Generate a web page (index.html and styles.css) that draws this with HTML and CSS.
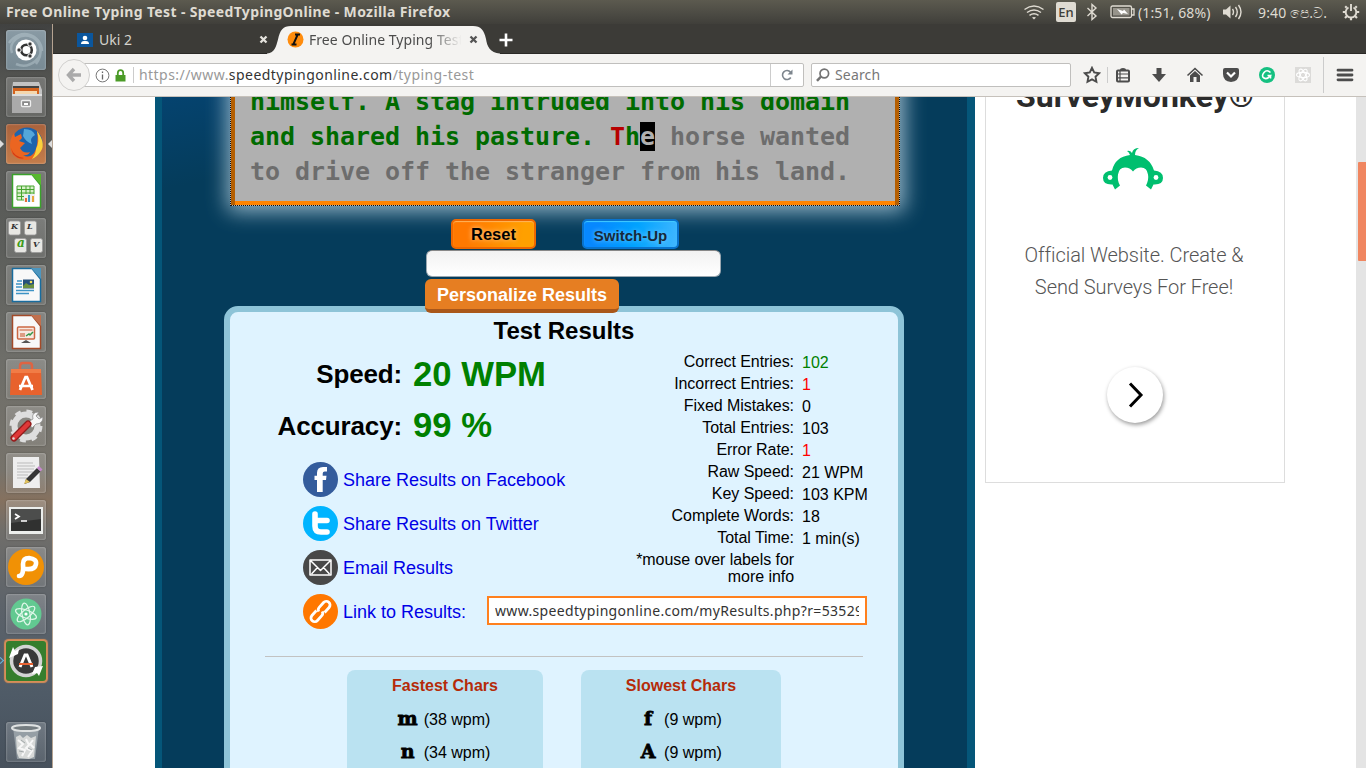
FILE: index.html
```html
<!DOCTYPE html>
<html lang="en">
<head>
<meta charset="utf-8">
<title>Free Online Typing Test - SpeedTypingOnline</title>
<link rel="stylesheet" href="styles.css">
</head>
<body>
<header class="panel">
  <div class="panel-title">Free Online Typing Test - SpeedTypingOnline - Mozilla Firefox</div>
  <div class="tray">
    <svg class="wifi" width="22" height="18" viewBox="0 0 22 18" fill="none" stroke="#dfdbd2" stroke-width="1.5"><path d="M1.5 6.5q9.5-7 19 0M4 9.5q7-5 14 0M6.500 12.300q4.500-3.300 9 0"/><path d="M9 14.500q2-1.200 4 0l-2 2z" fill="#dfdbd2" stroke="none"/></svg>
    <span class="lang">En</span>
    <svg class="bt" width="12" height="18" viewBox="0 0 12 18" fill="none" stroke="#dfdbd2" stroke-width="1.400"><path d="M1.500 5l8.500 8-4 3.500V1.500L10 5l-8.500 8"/></svg>
    <svg class="batt" width="26" height="14" viewBox="0 0 26 14"><rect x="1" y="1" width="20.500" height="11.500" rx="1.500" fill="none" stroke="#dfdbd2" stroke-width="1.300"/><path d="M22 4h2v6h-2" fill="none" stroke="#dfdbd2" stroke-width="1.300"/><rect x="3" y="3" width="16.500" height="7.500" fill="#97948b"/><path d="M7 4l6 2 1-1.500L18 9l-5-1-1.500 1.500z" fill="#fff"/></svg>
    <span class="battery-text">(1:51, 68%)</span>
    <svg class="vol" width="22" height="18" viewBox="0 0 22 18" fill="none" stroke="#dfdbd2" stroke-width="1.400"><path d="M1 6.500h3l4.500-4v13l-4.500-4H1z" fill="#dfdbd2" stroke="none"/><path d="M10.500 6q2 3 0 6M13.500 4q3.500 5 0 10M16.500 2q5 7 0 14"/></svg>
    <span class="clock">9:40 <span class="si">පෙ.ව.</span></span>
    <svg class="gear" width="18" height="18" viewBox="-9 -9 18 18" fill="none" stroke="#dfdbd2"><path d="M-2.500-4.500A5.300 5.300 0 1 0 2.500-4.500" stroke-width="1.900"/><path d="M0-8v7" stroke-width="1.900"/><path d="M5.500 0h2.700M-5.500 0h-2.700M0 5.500v2.700M4 4l2 2M-4 4l-2 2M4.300-4.300l1.500-1.500M-4.300-4.300l-1.500-1.500" stroke-width="2.200"/></svg>
  </div>
</header>

<div class="desktop">
  <nav class="launcher">
    <div class="tile dash"><svg viewBox="0 0 40 40"><path d="M6 23C2 12 14 2 26 7c10 5 11 18 4 27M10 34C24 40 39 27 34 15M3 13C14-3 35 4 36 21" fill="none" stroke="#bccbd2" stroke-width="2.500" opacity=".45"/><circle cx="20" cy="20" r="10.500" fill="#fff"/><circle cx="20.500" cy="20" r="5.300" fill="none" stroke="#333" stroke-width="2.600"/><g fill="#333" stroke="#fff"><circle cx="13" cy="20" r="2.200"/><circle cx="24" cy="14" r="2.200"/><circle cx="24" cy="26" r="2.200"/></g></svg></div>
    <div class="tile"><svg viewBox="0 0 40 40"><path d="M7 5h26l3 8v23H6V13z" fill="#c3c3c3"/><path d="M7 9h26v8H7z" fill="#444"/><path d="M7 11h26v6H7z" fill="#d4631d"/><path d="M9 14h22v3H9z" fill="#f4d7ae"/><path d="M6 17h30v19H6z" fill="#aaa"/><path d="M6 17h30v2H6z" fill="#ddd"/><rect x="15.500" y="23.500" width="9" height="6" rx="1" fill="#888" stroke="#eee" stroke-width="1.300"/><path d="M18 26h4v2h-4z" fill="#fff"/></svg></div>
    <div class="tile fox"><i class="arrow-l"></i><i class="arrow-r"></i><svg viewBox="0 0 40 40"><circle cx="21" cy="19" r="15.500" fill="#1c64ad"/><path d="M18 5q9 0 11 6-6 3-3 9-6-2-9-8z" fill="#53a7da"/><path d="M31 7q8 12 4 20-5 9-16 9Q5 35 4 22q0-8 4-13l1 4 6-3 1 4-3 3 6 2-5 5q3 6 10 4-2 4-7 3 6 4 11-2 5-8 3-22z" fill="#eb6521"/><path d="M31 7q9 12 4 20-4 6-9 8 4-6 4-10 4-8 1-18z" fill="#fbd23c"/><path d="M5 24q3 9 13 10-5 2-11-4z" fill="#d23b16"/></svg></div>
    <div class="tile"><svg viewBox="0 0 40 40"><path d="M6.500 3.500H26L34.500 14v22.500h-28z" fill="#fff" stroke="#3aa22b" stroke-width="1.500"/><path d="M25 3h10v11z" fill="#58b82f"/><path d="M11 15h17v14H11z" fill="#d9f1cb" stroke="#46a52f"/><path d="M11 18.500h17M11 22h17M11 25.500h17M15.500 15v14M20 15v14M24 15v14" stroke="#46a52f"/><path d="M18 23h11v8H18z" fill="#eee"/><path d="M19 27h2v4h-2z" fill="#e56937"/><path d="M22 24h2v7h-2z" fill="#3b9ccc"/><path d="M26 25h2v6h-2z" fill="#e6a63c"/></svg></div>
    <div class="tile"><svg viewBox="0 0 40 40"><g fill="#e7e7e3" stroke="#999" stroke-width=".8"><rect x="2.500" y="3" width="12" height="14" rx="2"/><rect x="18.500" y="3" width="12" height="14" rx="2"/><rect x="8.500" y="20.500" width="12" height="14" rx="2"/><rect x="24.500" y="20.500" width="12" height="14" rx="2"/></g><g class="keys"><text x="5" y="11">K</text><text x="21" y="11">L</text><text class="key-a" x="11" y="29">a</text><text x="27" y="29">V</text></g></svg></div>
    <div class="tile"><svg viewBox="0 0 40 40"><path d="M6.500 3.500H26L34.500 14v22.500h-28z" fill="#f8f8f8" stroke="#186c9e" stroke-width="1.500"/><path d="M25 3h10v11z" fill="#4d96bf"/><path d="M10 19h6M10 22h6M10 25.500h18M10 28.500h13M11 16h5" stroke="#3d93c5" stroke-width="1.700"/><path d="M17 14.500h11v9H17z" fill="#254f7b"/><path d="M17 21l3-3 3 2 5-1v4H17z" fill="#6a9040"/><circle cx="25" cy="17" r="1.300" fill="#f7df58"/></svg></div>
    <div class="tile"><svg viewBox="0 0 40 40"><path d="M6.500 3.500H26L34.500 14v22.500h-28z" fill="#f8f8f8" stroke="#a34a28" stroke-width="1.500"/><path d="M25 3h10v11z" fill="#c1704e"/><rect x="11.500" y="15" width="17" height="12" rx="1" fill="#f8e9e1" stroke="#cc6843" stroke-width="1.500"/><path d="M13.500 18h13" stroke="#d98a6d" stroke-width="1.500"/><path d="M14 21h5v4h-5z" fill="#de9c83"/><path d="M20 24l3-2 1 1 3-3" fill="none" stroke="#35974a" stroke-width="1.500"/><path d="M15 31l5-3 5 3z" fill="#555"/></svg></div>
    <div class="tile"><svg viewBox="0 0 40 40"><path d="M14 13V7q0-3 3-3h6q3 0 3 3v6" fill="none" stroke="#de6442" stroke-width="2.500"/><path d="M5 10h30l1 26H4z" fill="#e8622d"/><path d="M5 10h30v4H5z" fill="#f17c46"/><path d="M14 31l5.500-13h1.500l5.500 13M13 27h14" fill="none" stroke="#fff" stroke-width="2.700"/></svg></div>
    <div class="tile"><svg viewBox="0 0 40 40"><circle cx="20" cy="20" r="11.500" fill="none" stroke="#dedede" stroke-width="6"/><circle cx="20" cy="20" r="14.500" fill="none" stroke="#dedede" stroke-width="4" stroke-dasharray="5.700 5.690"/><path d="M22 16l5-3q-2-7 6-7l-3 4 3 3 4-2q0 7-7 7l-4 4z" fill="#f7f7f7" stroke="#888" stroke-width=".7"/><path d="M8 32L22 18" stroke="#911b1b" stroke-width="7" stroke-linecap="round"/><path d="M8 32L22 18" stroke="#df3838" stroke-width="4.500" stroke-linecap="round"/><circle cx="7.500" cy="32.500" r="1.200" fill="#ddd"/></svg></div>
    <div class="tile"><svg viewBox="0 0 40 40"><path d="M7 4h26l1 31H7z" fill="#eee"/><path d="M11 10h16M11 13h18M11 16h17M11 19h16M11 22h11M11 25h10" stroke="#bbb" stroke-width="1"/><path d="M20 26L31 15l3.500 3.500L24 29l-5.500 2z" fill="#353535"/><path d="M20 26l4 3-6 2z" fill="#e1c25d"/><path d="M31 15l2-2 3.500 3.500-2 2z" fill="#c888cf"/></svg></div>
    <div class="tile"><svg viewBox="0 0 40 40"><path d="M3 7h34v27H3z" fill="#eceeec"/><path d="M5 9h30v22H5z" fill="#303130"/><path d="M5 9h30v10L5 23z" fill="#4c4d4c"/><path d="M9 14l4 2.500L9 19M15 21h6" fill="none" stroke="#fff" stroke-width="1.700"/></svg></div>
    <div class="tile"><svg viewBox="0 0 40 40"><circle cx="20" cy="20" r="18" fill="#f19105"/><path d="M13 29q5 0 4-12 0-6 6-6 8 1 7 6-1 6-10 5" fill="none" stroke="#fff" stroke-width="4.600" stroke-linecap="round" stroke-linejoin="round"/></svg></div>
    <div class="tile"><svg viewBox="0 0 40 40"><circle cx="20" cy="20" r="15.500" fill="#62c991"/><g fill="none" stroke="#dff7e9" stroke-width="1.200"><ellipse cx="20" cy="20" rx="11" ry="4" transform="rotate(20 20 20)"/><ellipse cx="20" cy="20" rx="11" ry="4" transform="rotate(80 20 20)"/><ellipse cx="20" cy="20" rx="11" ry="4" transform="rotate(140 20 20)"/></g><circle cx="20" cy="20" r="1.600" fill="#fff"/></svg></div>
    <div class="tile updater"><i class="chev"></i><svg viewBox="0 0 40 40"><circle cx="20" cy="20" r="14.500" fill="#393939" stroke="#d4d4d4" stroke-width="3.500"/><path d="M3 17l4-11 2 4 4-2-1 5zM37 25l-4 10-2-3-5 1 3-7z" fill="#fff"/><path d="M14 26l5-12h2l5 12" fill="none" stroke="#fff" stroke-width="3"/><path d="M13 23h14" stroke="#e86333" stroke-width="2"/></svg></div>
    <div class="tile trash"><svg viewBox="0 0 40 40"><path d="M7 5h26l-4 32H11z" fill="#aeb7bc" opacity=".65"/><ellipse cx="20" cy="6" rx="14" ry="3" fill="#747c80" stroke="#dfe2e2" stroke-width="2"/><path d="M10 15l4-2 3 3 4-3 4 3 5-2-2 21-5 2-10-1-2-5z" fill="#d7d9d8"/><path d="M12 18l5 4-4 4 6 2-3 6M20 17l3 6-3 3 6 3-4 6M27 18l-3 4 4 4" fill="none" stroke="#f7f7f7" stroke-width="2"/><path d="M15 18l4 3M22 26l4 2M13 29l5 1" stroke="#a3a9aa"/></svg></div>
  </nav>

  <main class="browser">
    <div class="tabs">
      <div class="tab">
        <svg width="16" height="14" viewBox="0 0 16 14"><path d="M0 0h16v14H0z" fill="#0b569d"/><circle cx="8" cy="5" r="2.300" fill="#fff"/><path d="M4 11q0-3 3-3h2q3 0 3 3z" fill="#fff"/></svg>
        <span class="tab-name">Uki 2</span><svg class="close" width="9" height="9" viewBox="0 0 9 9"><path d="M1.500 1.500l6 6m0-6l-6 6" stroke="#e5e3dd" stroke-width="2.300"/></svg>
      </div>
      <div class="tab active">
        <svg class="tab-shape" width="236" height="29" viewBox="0 0 236 29"><path d="M0 28.500c8-1 9-7 11-14C13 5 16 1 24 1h182c8 0 11 4 13 13 1 7 4 14 14 14.500v.5H0z" fill="#f4f3f1"/></svg>
        <svg class="fav" width="17" height="17" viewBox="0 0 17 17"><circle cx="8.500" cy="8.500" r="8" fill="#ff8c0d"/><path d="M8 3.500h5M4.500 13.500h5M10.500 4l-4 9" stroke="#111" stroke-width="1.900"/></svg>
        <span class="tab-name">Free Online Typing Test</span><svg class="close" width="9" height="9" viewBox="0 0 9 9"><path d="M1.500 1.500l6 6m0-6l-6 6" stroke="#555" stroke-width="2.300"/></svg>
      </div>
      <svg class="plus" width="14" height="14" viewBox="0 0 14 14"><path d="M7 .500v13M.500 7h13" stroke="#fff" stroke-width="2.600"/></svg>
    </div>

    <div class="toolbar">
      <div class="back"><svg width="16" height="16" viewBox="0 0 16 16"><path d="M8 2L2.500 8 8 14M3 8h12" fill="none" stroke="#aaa" stroke-width="3.400"/></svg></div>
      <div class="url">
        <svg class="info" width="15" height="15" viewBox="0 0 15 15"><circle cx="7.500" cy="7.500" r="6.400" fill="none" stroke="#777"/><path d="M7.500 6.500v5M7.500 3.500v1.500" stroke="#666" stroke-width="1.300"/></svg>
        <svg class="lock" width="11" height="13" viewBox="0 0 11 13"><path d="M.5 6h10v6.500H.5z" fill="#4b9b27"/><path d="M2.800 7V4q0-2.800 2.700-2.800T8.200 4v3" fill="none" stroke="#4b9b27" stroke-width="1.800"/></svg>
        <span class="url-text">https://www.<b>speedtypingonline.com</b>/typing-test</span>
        <span class="reload"><svg width="14" height="14" viewBox="0 0 14 14"><path d="M10.800 9.500A4.500 4.500 0 1 1 10.500 4.200" fill="none" stroke="#7d858d" stroke-width="1.600"/><path d="M12.500 1.500v5h-5z" fill="#7d858d"/></svg></span>
      </div>
      <div class="search"><svg width="14" height="14" viewBox="0 0 14 14" fill="none" stroke="#737373"><circle cx="8.300" cy="5.500" r="4.300" stroke-width="1.700"/><path d="M5 8.500L1 12.800" stroke-width="2.500"/></svg><span>Search</span></div>
      <div class="tools">
        <svg viewBox="0 0 18 18"><path d="M9 1.800l2.200 4.700 5 .7-3.700 3.500.9 5.100L9 13.400l-4.500 2.400.9-5.100L1.800 7.200l5-.7z" fill="none" stroke="#4c4c4c" stroke-width="1.900"/></svg>
        <i class="sep"></i>
        <svg viewBox="0 0 18 18"><rect x="3" y="4.500" width="12" height="11" rx="1" fill="none" stroke="#4c4c4c" stroke-width="2"/><path d="M6 4q0-2 3-2t3 2" fill="#4c4c4c"/><path d="M3 8h12M3 11.800h12M6 5v10" stroke="#4c4c4c" stroke-width="1.200"/></svg>
        <svg viewBox="0 0 18 18"><path d="M6.500 2h5v6H16l-7 8-7-8h4.500z" fill="#4c4c4c"/></svg>
        <svg viewBox="0 0 18 18"><path d="M1.500 9.500L9 2.500l7.500 7" fill="none" stroke="#4c4c4c" stroke-width="1.600"/><path d="M4 9.500l5-4.500 5 4.500V16h-3.500v-5h-3v5H4z" fill="#4c4c4c"/></svg>
        <svg viewBox="0 0 18 18"><path d="M1 4q0-2 2-2h12q2 0 2 2v4q0 7-8 8Q1 15 1 8z" fill="#4c4c4c"/><path d="M5 6.500l4 4 4-4" fill="none" stroke="#fff" stroke-width="2.200"/></svg>
        <svg viewBox="0 0 18 18"><circle cx="9" cy="9" r="8" fill="#15c081"/><path d="M12.500 6.500Q9 3 6 6.500t0 5.500 6.500-2.500H9.500M12.500 9.500v3" fill="none" stroke="#fff" stroke-width="1.600"/></svg>
        <svg viewBox="0 0 18 18"><path d="M1 1h16v16H1z" fill="#dcdbd9"/><g fill="none" stroke="#fff" stroke-width="1.100"><ellipse cx="9" cy="9" rx="6.500" ry="2.600"/><ellipse cx="9" cy="9" rx="6.500" ry="2.600" transform="rotate(60 9 9)"/><ellipse cx="9" cy="9" rx="6.500" ry="2.600" transform="rotate(120 9 9)"/></g></svg>
        <i class="sep tall"></i>
        <svg viewBox="0 0 18 18"><path d="M2 4.200h14M2 9h14M2 13.800h14" stroke="#4c4c4c" stroke-width="2.800" stroke-linecap="round"/></svg>
      </div>
    </div>

    <div class="viewport">
      <article class="page">
        <div class="typing">
          <div class="line done">himself. A stag intruded into his domain</div>
          <div class="line"><span class="done">and shared his pasture. </span><span class="wrong">T</span><span class="done">h</span><span class="caret">e</span> horse wanted</div>
          <div class="line">to drive off the stranger from his land.</div>
        </div>
        <div class="buttons"><div class="btn reset">Reset</div><div class="btn switch">Switch-Up</div></div>
        <div class="entry"></div>
        <div class="personalize">Personalize Results</div>
        <section class="results">
          <h2>Test Results</h2>
          <div class="summary">
            <div class="left">
              <div class="score"><span class="k">Speed:</span><span class="v">20 WPM</span></div>
              <div class="score second"><span class="k">Accuracy:</span><span class="v">99 %</span></div>
              <div class="share"><svg viewBox="0 0 35 35"><circle cx="17.500" cy="17.500" r="17.500" fill="#345c9c"/><path d="M14 30V18h-2.500v-4.200H14V11q0-6 6-6h4v4.500h-2.300q-2 0-2 2v2.300h3.800L23 18h-3.300v12z" fill="#fff"/></svg>Share Results on Facebook</div>
              <div class="share"><svg viewBox="0 0 35 35"><circle cx="17.500" cy="17.500" r="17.500" fill="#00b4ff"/><path d="M12 8v12q0 6 6 6h6M12 14.500h12" fill="none" stroke="#fff" stroke-width="5.600" stroke-linecap="round"/></svg>Share Results on Twitter</div>
              <div class="share"><svg viewBox="0 0 35 35"><circle cx="17.500" cy="17.500" r="17.500" fill="#484848"/><path d="M7 10h21v15H7zM8 11l9.500 9.500L27 11M8.500 24l6-6.500M26.500 24l-6-6.500" fill="none" stroke="#fff" stroke-width="1.500" stroke-linejoin="round"/></svg>Email Results</div>
            </div>
            <dl class="stats">
              <dt>Correct Entries:</dt><dd class="good">102</dd>
              <dt>Incorrect Entries:</dt><dd class="bad">1</dd>
              <dt>Fixed Mistakes:</dt><dd>0</dd>
              <dt>Total Entries:</dt><dd>103</dd>
              <dt>Error Rate:</dt><dd class="bad">1</dd>
              <dt>Raw Speed:</dt><dd>21 WPM</dd>
              <dt>Key Speed:</dt><dd>103 KPM</dd>
              <dt>Complete Words:</dt><dd>18</dd>
              <dt>Total Time:</dt><dd>1 min(s)</dd>
              <dt class="note">*mouse over labels for more info</dt>
            </dl>
          </div>
          <div class="share linkrow"><svg viewBox="0 0 35 35"><circle cx="17.500" cy="17.500" r="17.500" fill="#ff7700"/><g transform="rotate(-48 17.500 17.500)" fill="none" stroke="#fff" stroke-width="2.800"><path d="M15.500 13.800H8.800a3.700 3.700 0 0 0 0 7.400h6.500a3.700 3.700 0 0 0 3.500-2.500"/><path d="M19.500 21.200h6.700a3.700 3.700 0 0 0 0-7.400h-6.500a3.700 3.700 0 0 0-3.500 2.500"/></g></svg><span class="link-label">Link to Results:</span><div class="linkbox"><span>www.speedtypingonline.com/myResults.php?r=53529</span></div></div>
          <hr>
          <div class="chars">
            <div class="card"><h3>Fastest Chars</h3><p><b>m</b>(38 wpm)</p><p><b>n</b>(34 wpm)</p></div>
            <div class="card slow"><h3>Slowest Chars</h3><p><b>f</b>(9 wpm)</p><p><b>A</b>(9 wpm)</p></div>
          </div>
        </section>
      </article>
      <aside class="ad">
        <h4>SurveyMonkey®</h4>
        <svg class="monkey" width="62" height="44" viewBox="0 0 62 44"><path d="M13 42.500l-2.500-5Q1 38 1 31q0-7 9-7.500Q13 10 28 8q-1-3-3-4 3-1 5 2 1-5 7-5-4 2-4 7 15 2 19 15.500 9 .5 9 7.500t-9.500 6.500l-2.500 5-5-4q3-6 2-11-1-7-7-7-5 0-8 4-3-4-8-4-6 0-7 7-1 6 2 11z" fill="#00bf6f"/><circle cx="8" cy="30.500" r="2.400" fill="#fff"/><circle cx="54" cy="30.500" r="2.400" fill="#fff"/></svg>
        <p>Official Website. Create &amp;<br>Send Surveys For Free!</p>
        <div class="go"><svg width="18" height="26" viewBox="0 0 18 26"><path d="M4 1.500L15 13 4 24.500" fill="none" stroke="#000" stroke-width="3"/></svg></div>
      </aside>
      <div class="scroll"><div class="thumb"></div></div>
    </div>
  </main>
</div>
</body>
</html>
```
FILE: styles.css
```css
* { box-sizing: border-box; }
body { margin: 0; width: 1366px; height: 768px; overflow: hidden; background: #fff; font-family: "Liberation Sans", Arial, sans-serif; }
h2, h3, h4, p, dl, dd { margin: 0; }
svg { display: block; flex: none; }

.panel { height: 24px; display: flex; justify-content: space-between; background: linear-gradient(#5c5a4f, #4b4a43 60%, #403f3a); color: #dfdbd2; font: 14px/23px "Noto Sans", "Open Sans", sans-serif; white-space: nowrap; }
.panel-title { padding-left: 6px; font-weight: 700; letter-spacing: .36px; }
.tray { display: flex; align-items: center; width: 343px; height: 24px; }
.lang { width: 20px; height: 20px; margin-left: 11px; border-radius: 2px; background: #dfdbd2; color: #3d3c37; text-align: center; line-height: 20px; font-size: 13px; font-weight: 500; }
.bt { margin-left: 10px; }
.batt { margin-left: 12px; }
.battery-text { width: 86px; padding-left: 2px; letter-spacing: .12px; }
.clock { width: 84px; margin-left: 14px; letter-spacing: .15px; }

.desktop { display: flex; height: 744px; }
.launcher { width: 53px; padding: 6px 0 0 6px; display: flex; flex-direction: column; gap: 7px; border-right: 1px solid #b5a391; background: linear-gradient(#414241 0, #545552 8%, #5c5e5b 30%, #6e6e69 45%, #77736b 60%, #85715f 64%, #706e6a 68%, #5d636a 78%, #4f5b67 90%, #47515c); }
.tile { position: relative; flex: none; width: 40px; height: 40px; border-radius: 3px; background: linear-gradient(rgba(255,255,255,.2), rgba(255,255,255,.1)); box-shadow: inset 0 0 2px rgba(255,255,255,.5), 0 0 2px rgba(0,0,0,.3); }
.tile svg { width: 40px; height: 40px; }
.dash { background: linear-gradient(#899aa4, #788a94); }
.fox { background: linear-gradient(#a9623c, #c47d4b); }
.updater { background: #367e2d; box-shadow: 0 0 1px 1.500px #d78e58; }
.trash { margin-top: 34px; }
.arrow-l, .arrow-r { position: absolute; top: 16px; border: 4px solid transparent; }
.arrow-l { left: -6px; border-left-color: #ddd; border-right: 0; }
.arrow-r { right: -6px; border-right-color: #ddd; border-left: 0; }
.chev { position: absolute; left: -8px; top: 17px; width: 5px; height: 5px; border: solid #69b7df; border-width: 1px 1px 0 0; transform: rotate(45deg); }
.keys { font: italic bold 8px "DejaVu Serif", serif; fill: #333; }
.key-a { font-size: 12px; fill: #3c9b16; }

.browser { width: 1313px; }
.tabs { height: 30px; display: flex; background: #3c3b37; border-bottom: 1px solid #2a2926; font: 14px/30px "Noto Sans", "Open Sans", sans-serif; }
.tab { width: 219px; display: flex; align-items: center; padding-left: 24px; color: #d5d3cd; padding-top: 2px; }
.tab-name { width: 158px; margin-left: 6px; overflow: hidden; white-space: nowrap; }
.tab .close { margin-left: 2px; }
.active { position: relative; width: 226px; padding-left: 15px; color: #4c4c4c; }
.tab-shape { position: absolute; left: -5px; top: 1px; height: 29px; }
.active .fav, .active .tab-name, .active .close { position: relative; }
.active .tab-name { width: 154px; margin-left: 5px; letter-spacing: .05px; -webkit-mask-image: linear-gradient(90deg, #000 78%, transparent 99%); mask-image: linear-gradient(90deg, #000 78%, transparent 99%); }
.active .close { margin-left: 6px; }
.plus { align-self: center; margin: 2px 0 0 1px; }

.toolbar { height: 43px; display: flex; align-items: center; background: #f4f3f1; border-bottom: 1px solid #c6c1bb; font: 14px/22px "Noto Sans", "Open Sans", sans-serif; padding-left: 5px; }
.back { position: relative; z-index: 1; width: 32px; height: 32px; flex: none; border: 1px solid #d1d0ce; border-radius: 50%; background: #f4f3f1; display: flex; align-items: center; justify-content: center; }
.url, .search { height: 24px; flex: none; border: 1px solid #c0bfbd; background: #fff; display: flex; align-items: center; }
.url { width: 731px; margin-left: -17px; padding-left: 21px; border-radius: 0 2px 2px 0; }
.lock { margin-left: 5px; }
.url-text { width: 638px; margin-left: 7px; border-left: 1px solid #ccc; padding-left: 5px; height: 16px; line-height: 16px; color: #999; letter-spacing: .45px; }
.url-text b { font-weight: 400; color: #333; }
.reload { width: 33px; height: 22px; display: flex; align-items: center; justify-content: center; border-left: 1px solid #ccc; }
.search { width: 260px; margin-left: 7px; padding-left: 4px; color: #777; border-radius: 2px; letter-spacing: .15px; }
.search span { margin-left: 5px; }
.tools { display: flex; align-items: center; flex: none; margin-left: 12px; }
.tools svg { width: 18px; height: 18px; margin-right: 18px; }
.tools svg:first-child { margin-right: 6px; }
.tools svg:last-child { margin-right: 0; }
.sep { width: 1px; height: 16px; background: #ccc; margin-right: 6px; }
.sep.tall { height: 36px; margin: 0 12px 0 -7px; }

.viewport { height: 671px; display: flex; overflow: hidden; background: #fff; padding-left: 102px; }
.page { width: 820px; flex: none; height: 671px; overflow: hidden; border-left: 7px solid #055679; border-right: 8px solid #055679; background: linear-gradient(168deg, #05436f, #053c5b 11%); }
.typing { width: 670px; height: 206px; margin: -97px 0 0 68px; padding: 83px 0 0 19px; border: 1px dotted #111; background: #b0b0b0; box-shadow: inset 4px 0 #b55e00, inset -4px 0 #b55e00, inset 0 -4px #ff8400, 1px 2px 20px 3px rgba(220,240,250,.7); }
.line { height: 35px; font: bold 25px/35px "DejaVu Sans Mono", monospace; letter-spacing: -.05px; color: #6d6d6d; white-space: pre; }
.done { color: #006b00; }
.wrong { color: #b80000; }
.caret { background: #000; color: #b0b0b0; }
.buttons { display: flex; margin: 13px 0 0 289px; gap: 46px; height: 30px; }
.btn { height: 30px; border-radius: 5px; display: flex; align-items: center; justify-content: center; font-weight: 700; }
.reset { width: 85px; font-size: 16.500px; color: #000; border: 2px solid #ee6800; background: linear-gradient(100deg, #ff7900 20%, #ffa000 85%); box-shadow: inset 0 1px 1px #ffb45c; text-shadow: 0 0 5px #ffd3a2; padding-top: 1px; }
.switch { width: 97px; font-size: 15px; color: #16283a; border: 2px solid #0873ce; background: linear-gradient(100deg, #0788ff 15%, #00a2ff 55%, #41b7ff); box-shadow: inset 0 1px 1px #44cbff; text-shadow: 0 0 5px #7bd0ff; padding-top: 2px; }
.entry { width: 295px; height: 27px; margin: 1px 0 0 263.500px; border: 1.500px solid #9aa7b0; border-top-color: #888; border-radius: 6px; background: linear-gradient(#f2f2f2, #fff); }
.personalize { position: relative; z-index: 1; width: 194px; height: 34px; margin: 2px 0 0 263px; border-radius: 6px; border-bottom: 4px solid #a9571a; background: #e67e22; color: #fff; font: bold 18px/32px "Liberation Sans", sans-serif; text-align: center; }
.results { width: 680px; height: 500px; margin: -7px 0 0 62px; border: 6px solid #8ec4d8; border-radius: 14px; background: #dff3ff; }
.results h2 { font-size: 24px; line-height: 28px; padding-top: 5px; text-align: center; color: #000; }
.summary { display: flex; height: 245px; }
.left { width: 388px; padding-top: 3px; }
.score { height: 52px; display: flex; line-height: 52px; font-weight: 700; }
.score .k { width: 172px; text-align: right; font-size: 26px; letter-spacing: -.15px; line-height: 53px; }
.score .v { margin-left: 11px; font-size: 34.700px; color: green; }
.second .v { line-height: 50px; }
.share { display: flex; align-items: center; height: 44px; padding: 2px 0 0 73px; font-size: 18px; color: #0000e6; }
.share svg { width: 35px; height: 35px; margin: 0 5px 2px 0; }
.score + .share { margin-top: 5px; }
.stats { width: 280px; display: grid; grid-template-columns: 176px 1fr; grid-auto-rows: 22px; column-gap: 8px; padding-top: 6px; font-size: 16px; line-height: 22px; color: #000; align-content: start; }
.stats dt { text-align: right; letter-spacing: -.06px; }
.stats dd { padding-top: 1px; }
.good { color: green; }
.stats .bad { color: red; }
.stats .note { line-height: 17px; padding: 2px 0 0 15px; height: 40px; }
.linkrow { margin-top: -1px; }
.link-label { width: 144px; }
.linkbox { width: 380px; height: 29px; border: 2px solid #ff801e; background: #fff; margin-bottom: 4px; padding: 0 6px; font: 14px/25px "Noto Sans", "Open Sans", sans-serif; letter-spacing: .33px; color: #333; }
.linkbox span { display: block; overflow: hidden; white-space: nowrap; }
.results hr { width: 598px; height: 1px; margin: 23px 0 13px 35px; border: 0; background: #c2c2c2; }
.chars { display: flex; gap: 38px; padding-left: 117px; }
.card { width: 196px; height: 150px; border-radius: 8px; background: #bae2f1; text-align: center; font-size: 16px; }
.slow { width: 200px; }
.card h3 { font-size: 16px; line-height: 20px; color: #b52b09; padding-top: 6px; margin-bottom: 7px; }
.card p { height: 33px; display: flex; justify-content: center; line-height: 33px; color: #000; }
.card b { width: 16px; display: flex; justify-content: center; font: bold 19px/30px "DejaVu Serif", serif; margin-right: 8px; -webkit-text-stroke: .8px #000; }

.ad { width: 300px; height: 386px; margin-left: 10px; flex: none; border: 1px solid #ddd; border-top: 0; text-align: center; font-family: Roboto, sans-serif; display: flex; flex-direction: column; align-items: center; }
.ad h4 { font-size: 32px; line-height: 40px; margin-top: -21px; color: #2b2b2b; font-weight: 700; }
.monkey { margin: 31px 0 0 -4px; }
.ad p { margin: 48px 2px 0 0; font-size: 20px; line-height: 32px; font-weight: 300; letter-spacing: -.07px; color: #555; white-space: nowrap; }
.go { width: 56px; height: 56px; margin-top: 64px; border-radius: 50%; background: #fff; box-shadow: 1px 2px 4px rgba(0,0,0,.4); display: flex; align-items: center; justify-content: center; }
.scroll { width: 10px; margin-left: auto; padding: 65px 0 0 2px; background: #e4e4e4; }
.thumb { height: 99px; background: #f08660; border-radius: 1px 0 0 1px; }
```
